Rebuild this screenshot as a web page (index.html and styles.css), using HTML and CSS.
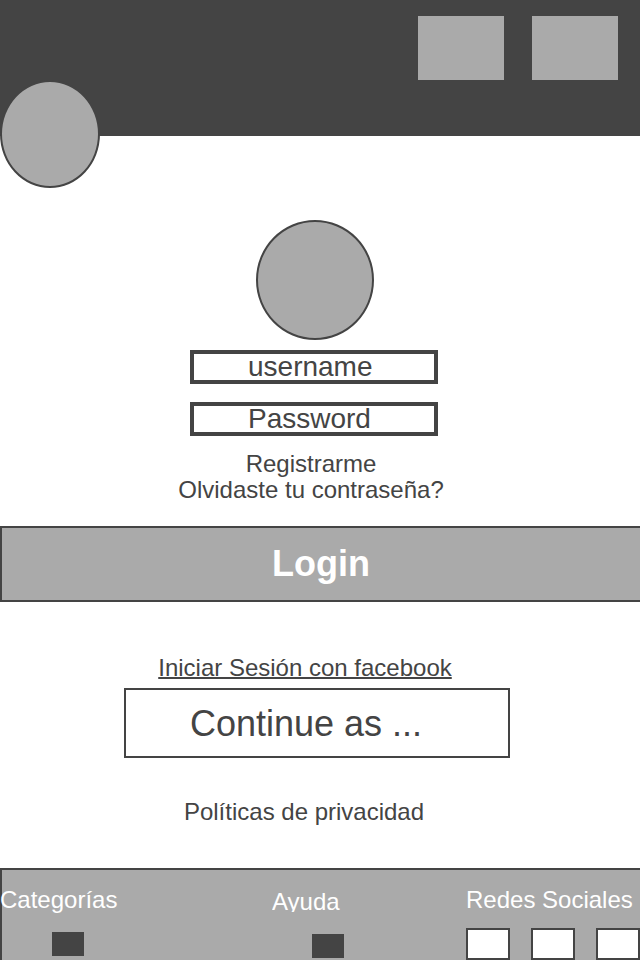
FILE: index.html
```html
<!DOCTYPE html>
<html lang="es">
<head>
<meta charset="utf-8">
<meta name="viewport" content="width=device-width, initial-scale=1">
<title>Login</title>
<link rel="stylesheet" href="styles.css">
</head>
<body>
<header class="header">
  <a class="logo" href="#" aria-label="Inicio"></a>
  <nav class="header-nav" aria-label="Principal">
    <a class="nav-tile" href="#" aria-label="Menú"></a>
    <a class="nav-tile" href="#" aria-label="Buscar"></a>
  </nav>
</header>
<main>
  <form class="login" action="#">
    <div class="fields">
      <div class="avatar"></div>
      <input class="field" type="text" placeholder="username" aria-label="username">
      <input class="field" type="password" placeholder="Password" aria-label="Password">
    </div>
    <div class="help">
      <a href="#">Registrarme</a>
      <a href="#">Olvidaste tu contraseña?</a>
    </div>
    <button class="login-button" type="submit">Login</button>
  </form>
  <section class="social-login">
    <a class="facebook" href="#">Iniciar Sesión con facebook</a>
    <button class="continue-button" type="button">Continue as ...</button>
    <a class="privacy" href="#">Políticas de privacidad</a>
  </section>
</main>
<footer class="footer">
  <div class="footer-column">
    <span class="footer-title">Categorías</span>
    <a class="marker marker-categories" href="#" aria-label="Ver categorías"></a>
  </div>
  <div class="footer-column footer-help">
    <span class="footer-title">Ayuda</span>
    <a class="marker marker-help" href="#" aria-label="Ver ayuda"></a>
  </div>
  <div class="footer-column">
    <span class="footer-title">Redes Sociales</span>
    <div class="networks">
      <a class="network" href="#" aria-label="Facebook"></a>
      <a class="network" href="#" aria-label="Twitter"></a>
      <a class="network" href="#" aria-label="Instagram"></a>
    </div>
  </div>
</footer>
</body>
</html>
```
FILE: styles.css
```css
:root {
  --dark: #444;
  --gray: #aaa;
}

* {
  box-sizing: border-box;
}

body {
  margin: 0;
  min-height: 100vh;
  display: flex;
  flex-direction: column;
  background: #fff;
  color: var(--dark);
  font-family: "Liberation Sans", Arial, sans-serif;
  font-size: 24px;
  line-height: 26px;
}

a {
  color: inherit;
  text-decoration: none;
}

.header {
  position: relative;
  padding: 16px 22px 56px;
  background: var(--dark);
}

.header-nav {
  display: flex;
  justify-content: flex-end;
  gap: 28px;
}

.nav-tile {
  width: 86px;
  height: 64px;
  background: var(--gray);
}

.logo {
  position: absolute;
  left: 0;
  top: 80px;
  width: 100px;
  height: 108px;
  border: 2px solid var(--dark);
  border-radius: 50%;
  background: var(--gray);
}

.fields {
  display: flex;
  flex-direction: column;
  align-items: center;
  padding: 84px 12px 0 0;
}

.avatar {
  width: 118px;
  height: 120px;
  margin: 0 0 10px 2px;
  border: 2px solid var(--dark);
  border-radius: 50%;
  background: var(--gray);
}

.field {
  width: 248px;
  height: 34px;
  padding: 0 0 0 54px;
  border: 4px solid var(--dark);
  border-radius: 0;
  background: #fff;
  color: var(--dark);
  font: inherit;
  font-size: 28px;
}

.field + .field {
  margin-top: 18px;
}

.field::placeholder {
  color: var(--dark);
  opacity: 1;
}

.help {
  display: flex;
  flex-direction: column;
  align-items: center;
  padding: 15px 18px 23px 0;
}

.login-button {
  display: block;
  width: 100%;
  height: 76px;
  padding: 0;
  border: 2px solid var(--dark);
  border-right: 0;
  background: var(--gray);
  color: #fff;
  font: inherit;
  font-size: 36px;
  font-weight: bold;
}

.social-login {
  display: flex;
  flex-direction: column;
  align-items: center;
  padding: 53px 6px 0 0;
}

.facebook {
  margin-right: 24px;
  text-decoration: underline;
  text-decoration-thickness: 2px;
  text-decoration-skip-ink: none;
}

.continue-button {
  width: 386px;
  height: 70px;
  margin: 7px 0 41px;
  padding: 2px 22px 0 0;
  border: 2px solid var(--dark);
  background: #fff;
  color: var(--dark);
  font: inherit;
  font-size: 36px;
}

.privacy {
  margin-right: 26px;
}

.footer {
  display: grid;
  grid-template-columns: 272fr 194fr 174fr;
  margin-top: auto;
  padding-top: 19px;
  background: var(--gray);
  box-shadow: inset 2px 2px 0 var(--dark);
  color: #fff;
}

.footer-column {
  height: 73px;
}

.footer-help {
  padding-top: 2px;
}

.footer-title {
  display: block;
  height: 26px;
  white-space: nowrap;
}

/* The help label's box ends just above its descenders. */
.footer-help .footer-title {
  height: 23px;
  overflow: hidden;
}

.marker {
  display: block;
  width: 32px;
  height: 24px;
  background: var(--dark);
}

.marker-categories {
  margin: 19px 0 0 52px;
}

.marker-help {
  margin: 22px 0 0 40px;
}

.networks {
  display: flex;
  justify-content: space-between;
  margin-top: 15px;
}

.network {
  width: 44px;
  height: 32px;
  border: 2px solid var(--dark);
  background: #fff;
}
```
